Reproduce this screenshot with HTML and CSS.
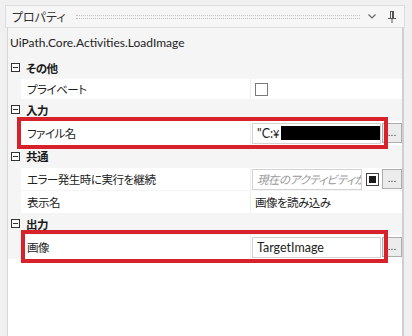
FILE: index.html
```html
<!DOCTYPE html>
<html lang="ja">
<head>
<meta charset="utf-8">
<link rel="stylesheet" href="styles.css">
</head>
<body>
<div class="titlebar">
  <span class="title">プロパティ</span>
  <span class="grip"></span>
  <svg class="chev" width="8" height="5" viewBox="0 0 8 5"><path d="M0.5 0.5 L4 4 L7.5 0.5" fill="none" stroke="#666" stroke-width="1.2"/></svg>
  <svg class="pin" width="8" height="12" viewBox="0 0 8 12"><path d="M2 0.5 H6 M2.5 0.5 V7 M5.5 0.5 V7 M0 7.5 H8 M4 7.5 V12" fill="none" stroke="#555" stroke-width="1"/><path d="M4.5 1 V7" stroke="#555" stroke-width="1"/></svg>
</div>
<div class="panel">
  <div class="top">
    <div class="typename">UiPath.Core.Activities.LoadImage</div>
    <div class="grid">
      <div class="cat c1"><span class="exp"></span><span>その他</span></div>
      <div class="prop h20"><div class="name">プライベート</div><div class="val"><span class="cb"></span></div></div>
      <div class="cat c1"><span class="exp"></span><span>入力</span></div>
      <div class="prop h24">
        <div class="name">ファイル名</div>
        <div class="val"><div class="tb tb-wide"><span class="latin">"C:</span>¥<span class="redact"></span></div><div class="btn">...</div></div>
        <div class="mark mark-file"></div>
      </div>
      <div class="cat c2"><span class="exp"></span><span>共通</span></div>
      <div class="prop h22"><div class="name">エラー発生時に実行を継続</div><div class="val"><div class="tb tb-short"><span class="ph">現在のアクティビティが</span></div><span class="cbf"><span></span></span><div class="btn">...</div></div></div>
      <div class="prop h22"><div class="name">表示名</div><div class="val"><span class="plain">画像を読み込み</span></div></div>
      <div class="cat c1"><span class="exp"></span><span>出力</span></div>
      <div class="prop h24">
        <div class="name">画像</div>
        <div class="val"><div class="tb tb-wide"><span class="latin">TargetImage</span></div><div class="btn">...</div></div>
        <div class="mark mark-img"></div>
      </div>
    </div>
  </div>
</div>
</body>
</html>
```
FILE: styles.css
```css
html, body {
  margin: 0;
  padding: 0;
}
body {
  background: #f0f0f0;
  font-family: "Noto Sans CJK JP", "Noto Sans", sans-serif;
  font-feature-settings: "palt";
  font-size: 12px;
  color: #1e1e1e;
  width: 412px;
  height: 336px;
  overflow: hidden;
}
.titlebar {
  margin: 5px 7px 0 5px;
  height: 23px;
  box-sizing: border-box;
  border: 1px solid #dddddd;
  background: #f6f6f6;
  display: flex;
  align-items: center;
  padding-left: 6px;
  padding-right: 8px;
}
.title {
  color: #333;
  white-space: nowrap;
}
.grip {
  flex: 1;
  height: 2px;
  border-top: 1px dotted #c4c4c4;
  border-bottom: 1px dotted #c4c4c4;
  margin: 0 8px 0 10px;
}
.chev {
  margin-right: 12px;
}
.panel {
  margin-left: 7px;
  width: 397px;
  height: 308px;
  box-sizing: border-box;
  border-left: 1px solid #d6d6d6;
  border-right: 2px solid #cfcfcf;
  background: #ffffff;
}
.top {
  background: #f5f5f5;
}
.typename {
  height: 29px;
  line-height: 29px;
  padding-left: 2px;
  color: #222;
  font-family: Lato, "Noto Sans", sans-serif;
  font-size: 12px;
}
.grid {
  font-size: 11.5px;
  letter-spacing: -0.5px;
}
.cat {
  display: flex;
  align-items: center;
  padding-left: 3px;
  font-weight: 700;
  color: #1a1a1a;
}
.c1 { height: 21px; }
.c2 { height: 22px; }
.exp {
  width: 9px;
  height: 9px;
  box-sizing: border-box;
  border: 1px solid #333;
  margin-right: 6px;
  position: relative;
  background: #fff;
}
.exp::after {
  content: "";
  position: absolute;
  left: 1px;
  right: 1px;
  top: 3px;
  height: 1px;
  background: #333;
}
.prop {
  display: flex;
  margin-left: 13px;
  margin-top: 1px;
  background: #ffffff;
  position: relative;
}
.h20 { height: 20px; }
.h22 { height: 22px; }
.h24 { height: 24px; }
.name {
  width: 230px;
  box-sizing: border-box;
  border-right: 1px solid #eeeeee;
  padding-left: 6px;
  display: flex;
  align-items: center;
  color: #222;
  white-space: nowrap;
}
.val {
  flex: 1;
  display: flex;
  align-items: center;
  padding-left: 1px;
  min-width: 0;
}
.cb {
  width: 13px;
  height: 13px;
  box-sizing: border-box;
  border: 1px solid #7a7a7a;
  background: #fff;
  margin-left: 3px;
}
.tb {
  height: 21px;
  box-sizing: border-box;
  border: 1px solid #d2d2d2;
  background: #fff;
  padding-left: 4px;
  display: flex;
  align-items: center;
  overflow: hidden;
  white-space: nowrap;
  color: #222;
}
.latin {
  font-family: Lato, "Noto Sans", sans-serif;
  font-size: 12.5px;
  letter-spacing: 0;
}
.tb-wide {
  width: 130px;
  margin-right: 1px;
}
.tb-short {
  width: 111px;
  margin-right: 4px;
}
.redact {
  display: inline-block;
  width: 100px;
  height: 14px;
  background: #000;
  margin-left: 2px;
  flex: none;
}
.ph {
  font-style: italic;
  color: #9a9a9a;
}
.cbf {
  width: 13px;
  height: 13px;
  box-sizing: border-box;
  border: 1px solid #444;
  background: #fff;
  display: flex;
  align-items: center;
  justify-content: center;
  margin-right: 3px;
  flex: none;
}
.cbf span {
  width: 7px;
  height: 7px;
  background: #1a1a1a;
}
.btn {
  width: 20px;
  height: 20px;
  box-sizing: border-box;
  border: 1px solid #adadad;
  background: #ececec;
  font-size: 10px;
  line-height: 10px;
  letter-spacing: 0;
  color: #333;
  display: flex;
  align-items: flex-end;
  justify-content: center;
  padding-bottom: 4px;
  font-family: "Liberation Sans", sans-serif;
  flex: none;
}
.plain {
  padding-left: 3px;
  color: #222;
}
.mark {
  position: absolute;
  border: 4px solid #d8222b;
  right: 14px;
  bottom: -4px;
  pointer-events: none;
}
.mark-file {
  left: -4px;
  top: -4px;
}
.mark-img {
  left: 0;
  top: -5px;
}
```
